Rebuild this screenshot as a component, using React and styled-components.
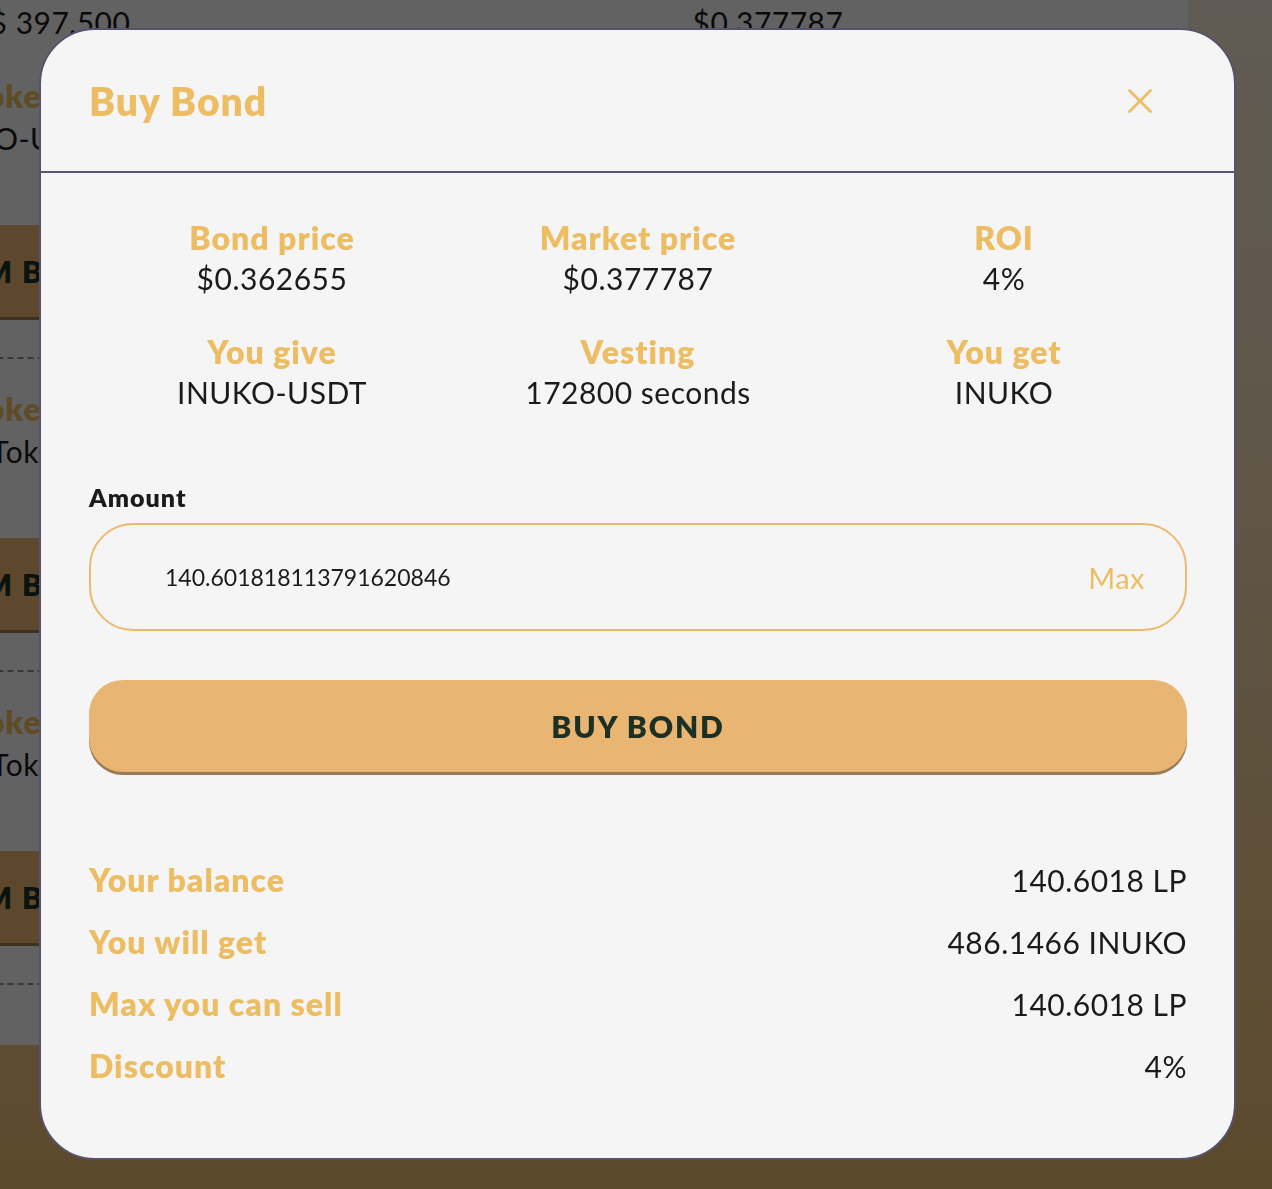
import React from "react";
import styled, { createGlobalStyle } from "styled-components";

const GlobalStyle = createGlobalStyle`
  html, body {
    margin: 0;
    padding: 0;
  }
  body {
    min-height: 1189px;
    background: linear-gradient(180deg, #f0e4d2 0%, #eed8b4 40%, #e8b970 100%);
    font-family: "Lato", "Noto Sans", sans-serif;
    overflow: hidden;
  }
  * { box-sizing: border-box; }
`;

const GOLD = "#ecbd63";
const DARK = "#1b1b1b";

/* ---------- background page ---------- */
const Panel = styled.div`
  width: 1188px;
  height: 1045px;
  background: #f5f5f5;
  overflow: hidden;
  padding-top: 2px;
`;

const TopRow = styled.div`
  display: grid;
  grid-template-columns: 708px 708px;
  margin-left: -294px;
  text-align: center;
  font-size: 30px;
  line-height: 40px;
  letter-spacing: 0.5px;
  color: ${DARK};
`;

const Section = styled.div`
  margin-left: -173px;
  padding-top: ${(p) => p.$top}px;
`;

const BgGrid = styled.div`
  display: grid;
  grid-template-columns: repeat(3, 376px);
  text-align: center;
`;

const BgLabel = styled.div`
  font-size: 32px;
  line-height: 40px;
  font-weight: 800;
  letter-spacing: 1px;
  color: ${GOLD};
`;

const BgValue = styled.div`
  font-size: 30px;
  line-height: 40px;
  margin-top: 2px;
  letter-spacing: 0.5px;
  color: ${DARK};
`;

const BgButton = styled.div`
  width: 376px;
  height: 92px;
  margin-top: 67px;
  border-radius: 34px;
  background: #e9b572;
  box-shadow: 0 3px 0 #987a55;
  display: flex;
  align-items: center;
  justify-content: center;
  font-size: 30px;
  font-weight: 800;
  letter-spacing: 1.5px;
  color: #1c3024;
`;

const Dashed = styled.div`
  margin-top: 40px;
  width: 1400px;
  border-top: 2px dashed #8a8a8a;
`;

/* ---------- overlay & modal ---------- */
const Overlay = styled.div`
  position: fixed;
  inset: 0;
  background: rgba(0, 0, 0, 0.6);
  display: flex;
  align-items: flex-start;
  justify-content: flex-start;
  padding: 28px 0 0 39px;
`;

const Modal = styled.div`
  width: 1197px;
  background: #f5f5f5;
  border: 2px solid #56526d;
  border-radius: 56px;
  overflow: hidden;
  font-family: "Lato", "Noto Sans", sans-serif;
`;

const Header = styled.div`
  height: 143px;
  display: flex;
  align-items: center;
  justify-content: space-between;
  padding: 0 82px 0 48px;
  border-bottom: 2px solid #5a5670;
`;

const Title = styled.h2`
  margin: 0;
  font-size: 39px;
  font-weight: 800;
  letter-spacing: 1px;
  color: ${GOLD};
`;

const CloseButton = styled.button`
  border: 0;
  background: none;
  padding: 0;
  width: 24px;
  height: 24px;
  cursor: pointer;
  display: flex;
`;

const Body = styled.div`
  padding: 45px 47px 61px 48px;
`;

const StatGrid = styled.div`
  display: grid;
  grid-template-columns: repeat(3, 1fr);
  row-gap: 34px;
  text-align: center;
`;

const StatLabel = styled.div`
  font-size: 32px;
  line-height: 40px;
  font-weight: 800;
  letter-spacing: 1px;
  color: ${GOLD};
`;

const StatValue = styled.div`
  font-size: 30px;
  line-height: 40px;
  letter-spacing: 0.5px;
  color: ${DARK};
`;

const FieldLabel = styled.div`
  margin-top: 69px;
  font-size: 25px;
  line-height: 32px;
  font-weight: 800;
  letter-spacing: 1px;
  color: ${DARK};
`;

const InputBox = styled.div`
  margin-top: 10px;
  height: 108px;
  border: 2px solid #ecb96f;
  border-radius: 44px;
  display: flex;
  align-items: center;
  padding: 0 40px 0 74px;
`;

const AmountInput = styled.input`
  flex: 1;
  border: 0;
  background: transparent;
  outline: none;
  font-family: inherit;
  font-size: 23px;
  color: ${DARK};
  padding: 0;
`;

const MaxButton = styled.button`
  border: 0;
  background: none;
  padding: 0;
  font-family: inherit;
  font-size: 29px;
  letter-spacing: 0.5px;
  color: ${GOLD};
  cursor: pointer;
`;

const BuyButton = styled.button`
  margin-top: 49px;
  width: 100%;
  height: 92px;
  border: 0;
  border-radius: 34px;
  background: #e9b572;
  box-shadow: 0 3px 0 #987a55;
  font-family: inherit;
  font-size: 30px;
  font-weight: 800;
  letter-spacing: 1.8px;
  color: #1c3024;
  cursor: pointer;
`;

const Summary = styled.div`
  margin-top: 77px;
`;

const SummaryRow = styled.div`
  display: flex;
  justify-content: space-between;
  align-items: center;
  line-height: 62px;
`;

const SummaryLabel = styled.span`
  font-size: 32px;
  font-weight: 800;
  letter-spacing: 1px;
  color: ${GOLD};
`;

const SummaryValue = styled.span`
  font-size: 30px;
  letter-spacing: 0.5px;
  color: ${DARK};
`;

const stats = [
  { label: "Bond price", value: "$0.362655" },
  { label: "Market price", value: "$0.377787" },
  { label: "ROI", value: "4%" },
  { label: "You give", value: "INUKO-USDT" },
  { label: "Vesting", value: "172800 seconds" },
  { label: "You get", value: "INUKO" },
];

const summary = [
  { label: "Your balance", value: "140.6018 LP" },
  { label: "You will get", value: "486.1466 INUKO" },
  { label: "Max you can sell", value: "140.6018 LP" },
  { label: "Discount", value: "4%" },
];

const bgSections = [
  { top: 34, value: "INUKO-USDT" },
  { top: 30, value: "Tok" },
  { top: 30, value: "Tok" },
];

export default function App() {
  return (
    <>
      <GlobalStyle />
      <Panel>
        <TopRow>
          <div>$ 397,500</div>
          <div>$0.377787</div>
        </TopRow>
        {bgSections.map((s, i) => (
          <Section key={i} $top={s.top}>
            <BgGrid>
              <div>
                <BgLabel>Token</BgLabel>
                <BgValue>{s.value}</BgValue>
              </div>
            </BgGrid>
            <BgButton>CLAIM BOND</BgButton>
            <Dashed />
          </Section>
        ))}
      </Panel>
      <Overlay>
        <Modal>
          <Header>
            <Title>Buy Bond</Title>
            <CloseButton aria-label="Close">
              <svg width="24" height="24" viewBox="0 0 24 24">
                <path
                  d="M1.5 1.5 L22.5 22.5 M22.5 1.5 L1.5 22.5"
                  stroke={GOLD}
                  strokeWidth="2.8"
                  strokeLinecap="round"
                />
              </svg>
            </CloseButton>
          </Header>
          <Body>
            <StatGrid>
              {stats.map((s) => (
                <div key={s.label}>
                  <StatLabel>{s.label}</StatLabel>
                  <StatValue>{s.value}</StatValue>
                </div>
              ))}
            </StatGrid>
            <FieldLabel>Amount</FieldLabel>
            <InputBox>
              <AmountInput defaultValue="140.601818113791620846" />
              <MaxButton>Max</MaxButton>
            </InputBox>
            <BuyButton>BUY BOND</BuyButton>
            <Summary>
              {summary.map((r) => (
                <SummaryRow key={r.label}>
                  <SummaryLabel>{r.label}</SummaryLabel>
                  <SummaryValue>{r.value}</SummaryValue>
                </SummaryRow>
              ))}
            </Summary>
          </Body>
        </Modal>
      </Overlay>
    </>
  );
}
